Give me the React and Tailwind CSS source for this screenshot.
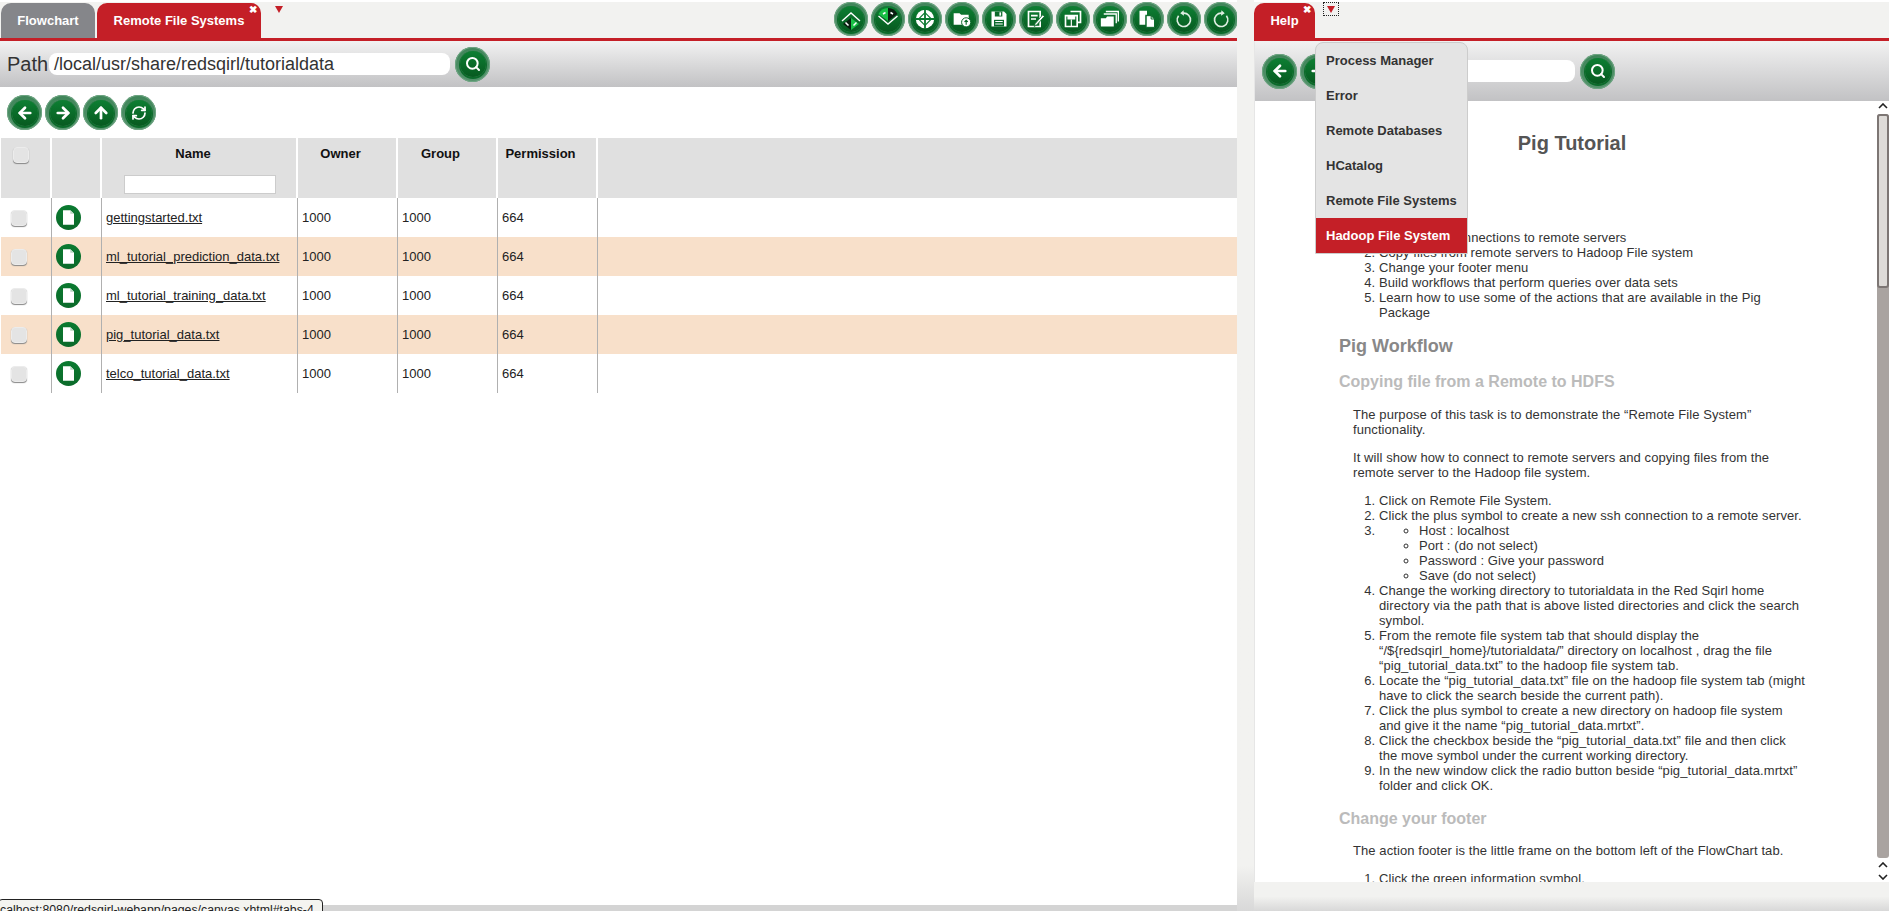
import { ArrowLeft, ArrowRight, ArrowUp, RefreshCw, Search } from "lucide-react";

const files = [
  "gettingstarted.txt",
  "ml_tutorial_prediction_data.txt",
  "ml_tutorial_training_data.txt",
  "pig_tutorial_data.txt",
  "telco_tutorial_data.txt",
];

const menuItems = ["Process Manager", "Error", "Remote Databases", "HCatalog", "Remote File Systems"];

const toolbarIcons = [
  // zoom to fit, diamond split in black and green
  <svg key="a" viewBox="0 0 24 24" className="w-6 h-6">
    <path d="M12 11 L4 17 L12 23 Z" fill="#0a1f10" />
    <path d="M12 11 L20 17 L12 23 Z" fill="#19c045" />
    <path d="M3 14 L12 6 L21 14" fill="none" stroke="#fff" strokeWidth="1.4" />
    <path d="M6.500 15.500l3 3M17.500 15.500l-3 3" stroke="#fff" strokeWidth="1.5" />
  </svg>,
  <svg key="b" viewBox="0 0 24 24" className="w-6 h-6">
    <path d="M12 1 A11 11 0 0 0 2.500 7 L12 14 Z" fill="#19c045" />
    <path d="M12 1 A11 11 0 0 1 21.500 7 L12 14 Z" fill="#0a1f10" />
    <path d="M2.500 9 L12 17 L21.500 9" fill="none" stroke="#fff" strokeWidth="1.4" />
    <path d="M7 7l2.500-1.500M17 7l-2.500-1.500" stroke="#fff" strokeWidth="1.5" />
  </svg>,
  <svg key="c" viewBox="0 0 24 24" className="w-[22px] h-[22px]">
    <circle cx="12" cy="12" r="10" fill="#fff" />
    <path d="M12 5 L19 12 L12 19 L5 12 Z" fill="#fff" stroke="#0b7a30" strokeWidth="1.2" />
    <path d="M12 1v22M1 12h22" stroke="#0b7a30" strokeWidth="2" />
  </svg>,
  <svg key="d" viewBox="0 0 24 24" className="w-5 h-5">
    <path d="M2 5h7l2 2h9v12H2z" fill="#fff" />
    <circle cx="17" cy="16" r="5.500" fill="#fff" stroke="#0b6a2b" strokeWidth="1.2" />
    <path d="M17 19v-5M15 15.500l2-2 2 2" stroke="#0b6a2b" strokeWidth="1.400" fill="none" />
  </svg>,
  <svg key="e" viewBox="0 0 24 24" className="w-5 h-5">
    <path d="M3 3h15l3 3v15H3z" fill="#fff" />
    <path d="M7 3h9v6H7z" fill="#0b6a2b" />
    <path d="M12.500 4h2v4h-2z" fill="#fff" />
    <path d="M6 13h12v8H6z" fill="#0b6a2b" />
    <path d="M7.500 15h9M7.500 18h9" stroke="#fff" strokeWidth="1.200" />
  </svg>,
  <svg key="f" viewBox="0 0 24 24" className="w-5 h-5">
    <path d="M3 3h14v18H3z" fill="none" stroke="#fff" strokeWidth="2" />
    <path d="M6 8h8M6 12h6" stroke="#fff" strokeWidth="2" />
    <path d="M22 9 L13 19 l-3 2 1-3.500 L20 7z" fill="#fff" stroke="#0b6a2b" />
  </svg>,
  <svg key="g" viewBox="0 0 24 24" className="w-5 h-5">
    <path d="M9 3h12v13h-3" fill="none" stroke="#fff" strokeWidth="2" />
    <path d="M3 8h14v13H3z" fill="none" stroke="#fff" strokeWidth="2" />
    <path d="M6 8h8v4H6zM10 13v8" fill="#fff" stroke="#fff" strokeWidth="1.400" />
  </svg>,
  <svg key="h" viewBox="0 0 24 24" className="w-5 h-5">
    <path d="M7 3h15v12" fill="none" stroke="#fff" strokeWidth="1.600" />
    <path d="M4.500 6h15v11" fill="none" stroke="#fff" strokeWidth="1.600" />
    <path d="M1 11h6l1.500-2h8v12H1z" fill="#fff" />
  </svg>,
  <svg key="i" viewBox="0 0 24 24" className="w-5 h-5">
    <path d="M3 2h9v5h-2v12H3z" fill="#fff" />
    <path d="M11 8h6l4 4v10H11z" fill="#fff" stroke="#0b6a2b" strokeWidth="1.200" />
    <path d="M17 8v4h4" fill="none" stroke="#0b6a2b" strokeWidth="1.200" />
  </svg>,
  <svg key="j" viewBox="0 0 24 24" className="w-5 h-5" fill="none" stroke="#dfeee3" strokeWidth="2">
    <path d="M11 5 A8 8 0 1 1 5.500 8" />
    <path d="M11.500 1.500 L7.500 5 L12 8" fill="#dfeee3" stroke="none" />
  </svg>,
  <svg key="k" viewBox="0 0 24 24" className="w-5 h-5" fill="none" stroke="#dfeee3" strokeWidth="2">
    <path d="M13 5 A8 8 0 1 0 18.500 8" />
    <path d="M12.500 1.500 L16.500 5 L12 8" fill="#dfeee3" stroke="none" />
  </svg>,
];

// the glossy green round button used everywhere in the app
function GreenButton({ children, small }) {
  return (
    <div
      className={`${small ? "w-[34px] h-[34px]" : "w-[35px] h-[35px]"} shrink-0 rounded-full bg-gradient-to-b from-[#3f8559] to-[#54936c] flex items-center justify-center shadow-[inset_0_0_0_1px_#6fa583]`}
    >
      <div className="w-[26px] h-[26px] rounded-full bg-gradient-to-b from-[#0d7f33] to-[#075a20] shadow-[0_1px_0_1px_#0c6b2b] flex items-center justify-center">
        {children}
      </div>
    </div>
  );
}

const SearchButton = () => (
  <GreenButton>
    <Search size={16} color="#fff" strokeWidth={3} />
  </GreenButton>
);

function Checkbox() {
  return <div className="w-[16px] h-[16px] rounded-[4px] bg-[#e4e4e4] border border-[#ececec] shadow-[0_1px_1px_#888]" />;
}

function FileIcon() {
  return (
    <div className="w-[25px] h-[25px] rounded-full bg-gradient-to-b from-[#0a7a30] to-[#0b6a2a] flex items-center justify-center">
      <svg viewBox="0 0 12 16" className="w-[11px] h-[15px]">
        <path d="M0 0h8l4 4v12H0z" fill="#fff" />
        <path d="M8 0v4h4" fill="#b7d5bf" />
      </svg>
    </div>
  );
}

function Tab({ label, active, w }) {
  return (
    <div
      className={`${w} ${active ? "bg-[#c41f27]" : "bg-[#85868a]"} relative h-[35px] rounded-t-[10px] text-white font-bold text-[13px] flex items-center justify-center`}
    >
      {label}
      {active && <span className="absolute right-[4px] top-0 text-[10px] leading-[14px]">✖</span>}
    </div>
  );
}

const Triangle = () => <div className="w-0 h-0 border-x-[4px] border-x-transparent border-t-[7px] border-t-[#c41f27]" />;

const cols = "grid grid-cols-[51px_50px_196px_100px_100px_100px_1fr]";

function FileTable() {
  return (
    <div className="text-[13px] text-[#222]">
      <div className={`${cols} h-[60px] bg-[#e0e0e0] font-bold text-[#111]`}>
        <div className="border-r-2 border-white pl-[12px] pt-[9px]">
          <Checkbox />
        </div>
        <div className="border-r-2 border-white" />
        <div className="border-r-2 border-white flex flex-col items-center pt-[8px]">
          <span className="leading-[15px] mr-[12px]">Name</span>
          <input className="mt-[14px] w-[152px] h-[19px] bg-white border border-[#ccc] ml-[2px]" readOnly />
        </div>
        <div className="border-r-2 border-white text-center pt-[8px] leading-[15px] pr-[13px]">Owner</div>
        <div className="border-r-2 border-white text-center pt-[8px] leading-[15px] pr-[13px]">Group</div>
        <div className="border-r-2 border-white text-center pt-[8px] leading-[15px] pr-[13px]">Permission</div>
        <div />
      </div>
      {files.map((f, i) => (
        <div key={f} className={`${cols} h-[39px] items-stretch ${i % 2 ? "bg-[#f8e0ca]" : "bg-white"}`}>
          <div className="border-r border-[#b0b0b0] pl-[10px] flex items-center">
            <Checkbox />
          </div>
          <div className="border-r border-[#b0b0b0] pl-[4px] flex items-center">
            <FileIcon />
          </div>
          <div className="border-r border-[#b0b0b0] pl-[4px] flex items-center underline">{f}</div>
          <div className="border-r border-[#b0b0b0] pl-[4px] flex items-center">1000</div>
          <div className="border-r border-[#b0b0b0] pl-[4px] flex items-center">1000</div>
          <div className="border-r border-[#b0b0b0] pl-[4px] flex items-center">664</div>
          <div />
        </div>
      ))}
    </div>
  );
}

function LeftPanel() {
  return (
    <div className="w-[1237px] shrink-0 flex flex-col">
      <div className="h-[38px] pt-[1px] pl-[1px] bg-[#f2f2f0] flex items-start gap-[2px] border-t-2 border-white">
        <Tab label="Flowchart" w="w-[94px]" />
        <Tab label="Remote File Systems" active w="w-[164px]" />
        <div className="ml-[12px] mt-[3px]">
          <Triangle />
        </div>
        <div className="ml-auto flex gap-[3px] -mt-[1px] -mr-[1px]">
          {toolbarIcons.map((icon, i) => (
            <GreenButton key={i} small>
              {icon}
            </GreenButton>
          ))}
        </div>
      </div>
      <div className="h-[3px] bg-[#c41f27]" />
      <div className="h-[46px] bg-gradient-to-b from-[#f2f2f2] to-[#c2c2c4] flex items-center pl-[7px]">
        <span className="text-[20px] text-[#333] w-[42px]">Path</span>
        <div className="w-[401px] h-[22px] bg-white rounded-[8px] text-[18px] text-[#333] pl-[5px] leading-[22px]">
          /local/usr/share/redsqirl/tutorialdata
        </div>
        <div className="ml-[5px]">
          <SearchButton />
        </div>
      </div>
      <div className="flex gap-[3px] pl-[7px] pt-[8px] pb-[8px]">
        <GreenButton>
          <ArrowLeft size={18} color="#fff" strokeWidth={3.6} />
        </GreenButton>
        <GreenButton>
          <ArrowRight size={18} color="#fff" strokeWidth={3.6} />
        </GreenButton>
        <GreenButton>
          <ArrowUp size={18} color="#fff" strokeWidth={3.6} />
        </GreenButton>
        <GreenButton>
          <RefreshCw size={16} color="#fff" strokeWidth={2.6} />
        </GreenButton>
      </div>
      <div className="pl-[1px]">
        <FileTable />
      </div>
      <div className="flex-1" />
      <div className="h-[6px] bg-[#d4d4d4]" />
    </div>
  );
}

function HelpContent() {
  return (
    <div className="flex-1 overflow-hidden bg-white pl-[84px] text-[13px] leading-[15px] tracking-[0.08px] text-[#333]">
      <div className="w-[466px]">
        <h1 className="mt-[30px] text-[20px] leading-[24px] tracking-normal font-bold text-[#555] text-center">Pig Tutorial</h1>
        <ol className="mt-[75px] pl-[40px] list-decimal">
          <li>Create new connections to remote servers</li>
          <li>Copy files from remote servers to Hadoop File system</li>
          <li>Change your footer menu</li>
          <li>Build workflows that perform queries over data sets</li>
          <li>Learn how to use some of the actions that are available in the Pig Package</li>
        </ol>
        <h2 className="mt-[16px] text-[18px] leading-[21px] tracking-normal font-bold text-[#888]">Pig Workflow</h2>
        <h3 className="mt-[15px] text-[16px] leading-[19px] tracking-normal font-bold text-[#bbb]">Copying file from a Remote to HDFS</h3>
        <p className="mt-[16px] pl-[14px]">The purpose of this task is to demonstrate the “Remote File System” functionality.</p>
        <p className="mt-[13px] pl-[14px]">
          It will show how to connect to remote servers and copying files from the remote server to the Hadoop file system.
        </p>
        <ol className="mt-[13px] pl-[40px] list-decimal">
          <li>Click on Remote File System.</li>
          <li>Click the plus symbol to create a new ssh connection to a remote server.</li>
          <li>
            <ul className="pl-[40px] list-[circle]">
              <li>Host : localhost</li>
              <li>Port : (do not select)</li>
              <li>Password : Give your password</li>
              <li>Save (do not select)</li>
            </ul>
          </li>
          <li>
            Change the working directory to tutorialdata in the Red Sqirl home directory via the path that is above listed
            directories and click the search symbol.
          </li>
          <li>
            From the remote file system tab that should display the “/${"{"}redsqirl_home{"}"}/tutorialdata/” directory on
            localhost , drag the file “pig_tutorial_data.txt” to the hadoop file system tab.
          </li>
          <li>Locate the “pig_tutorial_data.txt” file on the hadoop file system tab (might have to click the search beside the current path).</li>
          <li>Click the plus symbol to create a new directory on hadoop file system and give it the name “pig_tutorial_data.mrtxt”.</li>
          <li>Click the checkbox beside the “pig_tutorial_data.txt” file and then click the move symbol under the current working directory.</li>
          <li>In the new window click the radio button beside “pig_tutorial_data.mrtxt” folder and click OK.</li>
        </ol>
        <h3 className="mt-[16px] text-[16px] leading-[19px] tracking-normal font-bold text-[#bbb]">Change your footer</h3>
        <p className="mt-[15px] pl-[14px]">The action footer is the little frame on the bottom left of the FlowChart tab.</p>
        <ol className="mt-[13px] pl-[40px] list-decimal">
          <li>Click the green information symbol.</li>
          <li>Click the plus symbol to add a new menu.</li>
        </ol>
      </div>
    </div>
  );
}

function Scrollbar() {
  return (
    <div className="w-[13px] shrink-0 bg-white flex flex-col items-center text-[#222]">
      <svg viewBox="0 0 10 6" className="w-[10px] h-[6px] mt-[2px] mb-[5px]">
        <path d="M1 5l4-4 4 4" fill="none" stroke="currentColor" strokeWidth="1.6" />
      </svg>
      <div className="w-[12px] flex-1 bg-[#a9a3a0] rounded-[3px]">
        <div className="h-[174px] rounded-[3px] border-2 border-[#7d7674] bg-[#dedbd8]" />
      </div>
      <svg viewBox="0 0 10 6" className="w-[10px] h-[6px] mt-[4px]">
        <path d="M1 5l4-4 4 4" fill="none" stroke="currentColor" strokeWidth="1.6" />
      </svg>
      <svg viewBox="0 0 10 6" className="w-[10px] h-[6px] mt-[6px] mb-[2px]">
        <path d="M1 1l4 4 4-4" fill="none" stroke="currentColor" strokeWidth="1.6" />
      </svg>
    </div>
  );
}

function HelpPanel() {
  return (
    <div className="flex-1 flex flex-col relative">
      <div className="h-[38px] shrink-0 border-t-2 border-white bg-[#f2f2f0] flex items-start">
        <div className="mt-[1px]">
          <Tab label="Help" active w="w-[61px]" />
        </div>
        <div className="ml-[8px] w-[16px] h-[14px] border border-dotted border-[#222] flex items-center justify-center">
          <Triangle />
        </div>
      </div>
      <div className="h-[3px] bg-[#c41f27] shrink-0" />
      <div className="h-[60px] shrink-0 bg-gradient-to-b from-[#f2f2f2] to-[#c2c2c4] flex items-center pl-[7px] gap-[3px] border-l border-[#e6e6e6]">
        <GreenButton>
          <ArrowLeft size={18} color="#fff" strokeWidth={3.6} />
        </GreenButton>
        <GreenButton>
          <ArrowRight size={18} color="#fff" strokeWidth={3.6} />
        </GreenButton>
        <div className="ml-[5px] w-[232px] h-[22px] bg-white rounded-[8px]" />
        <div className="ml-[2px]">
          <SearchButton />
        </div>
      </div>
      <div className="h-[781px] shrink-0 flex overflow-hidden border-l border-[#e6e6e6]">
        <HelpContent />
        <Scrollbar />
      </div>
      <div className="flex-1 bg-gradient-to-b from-[#f2f2f0] from-50% to-[#d8d8d8]" />

      {/* tab list dropdown, lies over the help toolbar */}
      <div className="absolute left-[61px] top-[42px] w-[153px] rounded-t-[8px] bg-[#e4e4e4] border border-[#ccc] text-[13px] font-bold text-[#333] overflow-hidden">
        {menuItems.map((m) => (
          <div key={m} className="h-[35px] pl-[10px] flex items-center">
            {m}
          </div>
        ))}
        <div className="h-[35px] pl-[10px] flex items-center bg-[#c41f27] text-white">Hadoop File System</div>
      </div>
    </div>
  );
}

export default function App() {
  return (
    <div className="relative h-[911px] overflow-hidden flex bg-white font-['Liberation_Sans',sans-serif]">
      <LeftPanel />
      <div className="w-[17px] shrink-0 bg-gradient-to-b from-[#f2f2f0] from-95% to-[#d8d8d8]" />
      <HelpPanel />

      {/* browser status bubble */}
      <div className="absolute -left-[2px] top-[899px] w-[325px] h-[20px] pl-[1px] pt-[2px] bg-[#f4f4f0] border border-[#222] rounded-[4px] text-[12.3px] leading-[17px] text-[#222] overflow-hidden whitespace-nowrap">
        calhost:8080/redsqirl-webapp/pages/canvas.xhtml#tabs-4
      </div>
    </div>
  );
}
